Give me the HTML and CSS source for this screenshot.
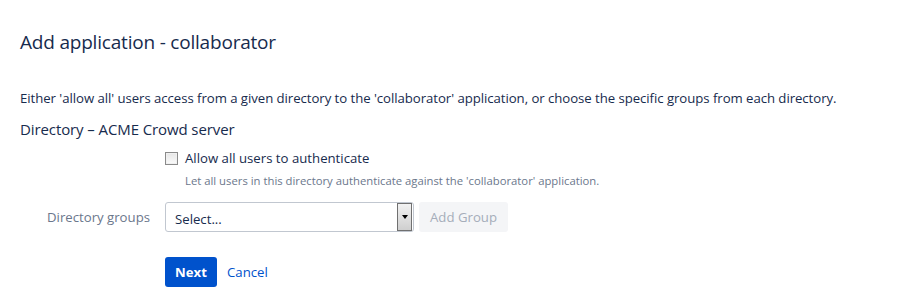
FILE: index.html
```html
<!DOCTYPE html>
<html>
<head>
<meta charset="utf-8">
<link rel="stylesheet" href="styles.css">
</head>
<body>
<div class="page">
  <h1 class="title">Add application - collaborator</h1>
  <p class="intro">Either 'allow all' users access from a given directory to the 'collaborator' application, or choose the specific groups from each directory.</p>
  <h2 class="dir-title">Directory – ACME Crowd server</h2>
  <div class="form">
    <div class="row row-check">
      <div class="label"></div>
      <div class="field">
        <label class="check"><span class="box"></span><span>Allow all users to authenticate</span></label>
        <div class="desc">Let all users in this directory authenticate against the 'collaborator' application.</div>
      </div>
    </div>
    <div class="row row-groups">
      <div class="label">Directory groups</div>
      <div class="field field-inline">
        <div class="select"><span class="select-text">Select...</span><span class="arrow"><span class="tri"></span></span></div>
        <button class="btn-add">Add Group</button>
      </div>
    </div>
    <div class="row row-actions">
      <div class="label"></div>
      <div class="field field-inline">
        <button class="btn-next">Next</button>
        <a class="cancel" href="#">Cancel</a>
      </div>
    </div>
  </div>
</div>
</body>
</html>
```
FILE: styles.css
```css
html, body {
  margin: 0;
  padding: 0;
  background: #fff;
}
body {
  font-family: "Open Sans", "Noto Sans", sans-serif;
  color: #172b4d;
}
.page {
  padding: 26px 20px 0 20px;
}
.title {
  font-size: 19px;
  font-weight: 400;
  margin: 0;
  line-height: 32px;
  letter-spacing: -0.2px;
}
.intro {
  font-size: 13.2px;
  margin: 30px 0 0 0;
  line-height: 20px;
  letter-spacing: -0.05px;
  white-space: nowrap;
}
.dir-title {
  font-size: 15px;
  font-weight: 400;
  margin: 9px 0 0 0;
  line-height: 24px;
  letter-spacing: -0.1px;
}
.row {
  display: flex;
}
.label {
  width: 130px;
  padding-right: 15px;
  text-align: right;
  font-size: 13.2px;
  color: #6b778c;
  flex: none;
}
.row-check {
  margin-top: 7px;
}
.check {
  display: flex;
  align-items: center;
  font-size: 13.2px;
  line-height: 20px;
}
.box {
  width: 11px;
  height: 11px;
  border: 1px solid #8a8a8a;
  background: linear-gradient(#e6e6e6, #fafafa);
  margin-right: 7px;
  box-shadow: inset 0 0 0 1px #f0f0f0;
}
.desc {
  font-size: 11.3px;
  color: #6b778c;
  margin: 5px 0 0 20px;
  line-height: 16px;
}
.row-groups {
  margin-top: 13px;
  align-items: center;
}
.field-inline {
  display: flex;
  align-items: center;
}
.select {
  width: 247px;
  height: 28px;
  border: 1px solid #c1c7d0;
  border-radius: 3px;
  display: flex;
  align-items: center;
  justify-content: space-between;
  font-size: 13.2px;
}
.select-text {
  padding-left: 9px;
  padding-top: 3px;
}
.arrow {
  width: 15px;
  height: 28px;
  border: 1px solid #707070;
  background: linear-gradient(#f2f2f2, #cfcfcf);
  display: flex;
  align-items: center;
  justify-content: center;
  box-sizing: border-box;
  margin-right: 1px;
}
.tri {
  width: 0;
  height: 0;
  border-left: 3px solid transparent;
  border-right: 3px solid transparent;
  border-top: 4px solid #000;
}
.btn-add {
  margin-left: 5px;
  height: 30px;
  width: 89px;
  border: none;
  border-radius: 3px;
  background: #f4f5f7;
  color: #a5adba;
  font-family: inherit;
  font-size: 13.2px;
  padding: 0;
}
.row-actions {
  margin-top: 25px;
}
.btn-next {
  height: 30px;
  width: 52px;
  border: none;
  border-radius: 3px;
  background: #0052cc;
  color: #fff;
  font-family: inherit;
  font-weight: 700;
  font-size: 13.2px;
  padding: 0;
}
.cancel {
  margin-left: 10px;
  color: #0052cc;
  text-decoration: none;
  font-size: 13.2px;
}
```
